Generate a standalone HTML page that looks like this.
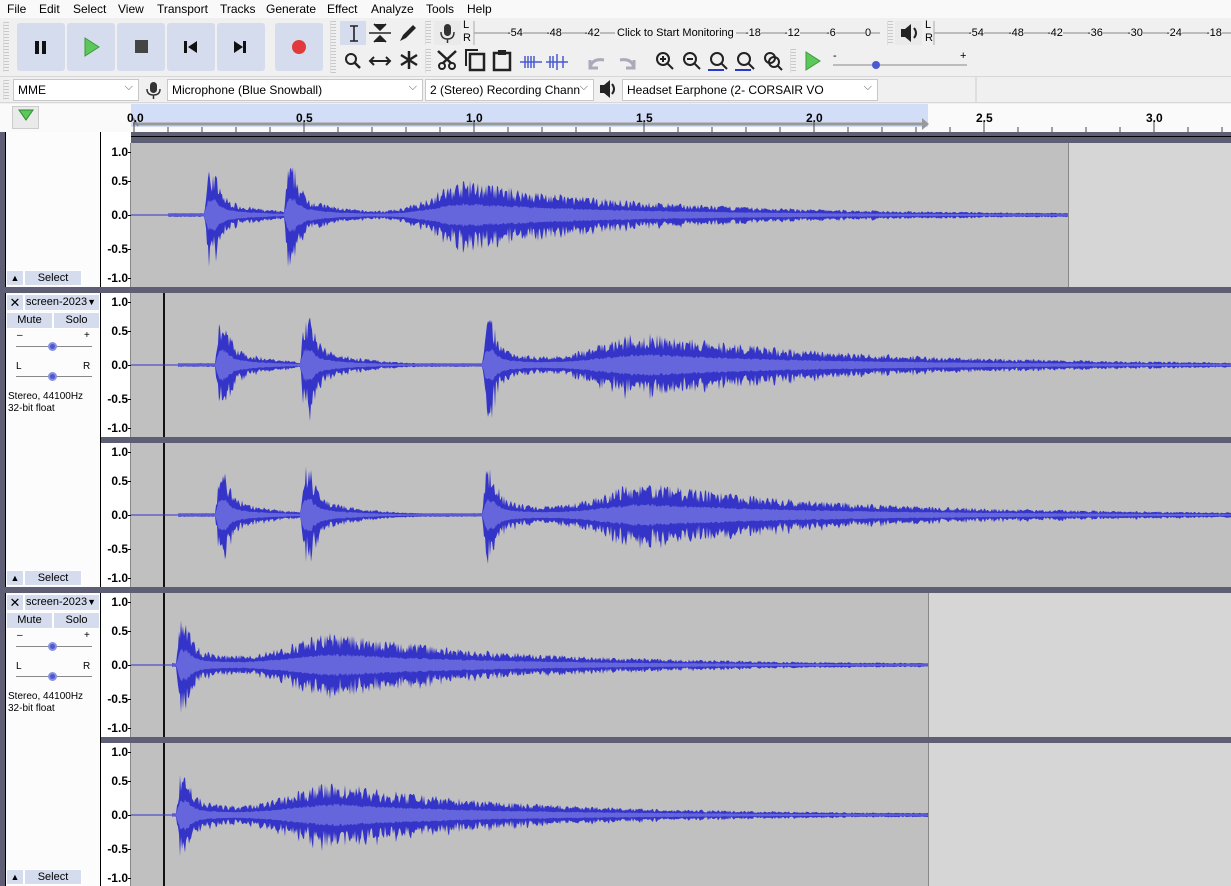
<!DOCTYPE html>
<html><head><meta charset="utf-8">
<style>
*{box-sizing:border-box;margin:0;padding:0}
body{width:1231px;height:886px;overflow:hidden;background:#f0f0f0;font-family:"Liberation Sans",Arial,sans-serif;font-size:12px;color:#000;position:relative}
.a{position:absolute}
.menu span{position:absolute;top:2px;font-size:12px}
.tb{background:#d5dcee;border-radius:3px}
.grip{position:absolute;width:6px;background:repeating-linear-gradient(#c8c8c8 0 1px,transparent 1px 3px);border-left:1px solid #ddd}
.sel{position:absolute;height:22px;background:#fff;border:1px solid #c8c8c8;font-size:12px;padding:3px 4px;white-space:nowrap;overflow:hidden}
.sel:after{content:"⌵";position:absolute;right:5px;top:1px;color:#555;font-size:11px}
.tl{position:absolute;font-weight:bold;font-size:12px}
.btn{position:absolute;background:#d5dcee;border:1px solid #fff;font-size:11px;text-align:center}
.vr{position:absolute;right:4px;font-weight:bold;font-size:12px}
</style></head><body>
<div class="a menu" style="left:0;top:0;width:1231px;height:18px;background:#f9f9f9">
<span style="left:7px">File</span><span style="left:39px">Edit</span><span style="left:73px">Select</span><span style="left:118px">View</span><span style="left:157px">Transport</span><span style="left:220px">Tracks</span><span style="left:266px">Generate</span><span style="left:327px">Effect</span><span style="left:371px">Analyze</span><span style="left:426px">Tools</span><span style="left:467px">Help</span>
</div>
<div class="a" style="left:0;top:18px;width:1231px;height:86px;background:#f0f0f0"></div>
<div class="grip" style="left:3px;top:22px;height:50px"></div>
<div class="a tb" style="left:17px;top:23px;width:48px;height:48px"></div>
<div class="a tb" style="left:67px;top:23px;width:48px;height:48px"></div>
<div class="a tb" style="left:117px;top:23px;width:48px;height:48px"></div>
<div class="a tb" style="left:167px;top:23px;width:48px;height:48px"></div>
<div class="a tb" style="left:217px;top:23px;width:48px;height:48px"></div>
<div class="a tb" style="left:275px;top:23px;width:48px;height:48px"></div>
<svg class="a" style="left:0;top:0" width="1231" height="104">
 <rect x="35" y="41" width="4" height="13" fill="#111"/><rect x="42" y="41" width="4" height="13" fill="#111"/>
 <path d="M85 38 L99 47 L85 56Z" fill="#5cc85c" stroke="#3a9a3a"/>
 <rect x="135" y="40" width="13" height="13" fill="#444"/>
 <rect x="184" y="41" width="3" height="12" fill="#111"/><path d="M197 41 L188 47 L197 53Z" fill="#111"/>
 <rect x="243" y="41" width="3" height="12" fill="#111"/><path d="M234 41 L243 47 L234 53Z" fill="#111"/>
 <circle cx="299" cy="47" r="7" fill="#e03a3a"/>
 <rect x="340" y="21" width="26" height="24" fill="#d5dcee"/>
 <path d="M350 26h8M354 26v15M350 41h8" stroke="#222" stroke-width="1.6" fill="none"/>
 <path d="M369 33h22M374 24l6 6 6-6M374 42l6-6 6 6" stroke="#222" stroke-width="1.6" fill="#222"/>
 <path d="M400 41l3-6 10-10 3 3-10 10z" fill="#222"/>
 <circle cx="351" cy="59" r="5" stroke="#222" stroke-width="2" fill="none"/><path d="M355 63l5 5" stroke="#222" stroke-width="2.5"/>
 <path d="M370 61h20M374 57l-4 4 4 4M386 57l4 4-4 4" stroke="#222" stroke-width="2" fill="none"/>
 <path d="M409 51v18M401 55l16 10M401 65l16-10" stroke="#222" stroke-width="2.5"/>
 <rect x="434" y="21" width="27" height="24" fill="#eaeaea"/>
 <rect x="444" y="24" width="7" height="12" rx="3.5" fill="#333"/><path d="M441 32q0 7 6.5 7q6.5 0 6.5-7M447.5 39v4" stroke="#333" stroke-width="1.5" fill="none"/>
 <path d="M474 33H880" stroke="#888"/>
 <path d="M474 21v24" stroke="#aaa"/>
 <circle cx="442" cy="66" r="3" stroke="#222" stroke-width="2" fill="none"/><circle cx="452" cy="66" r="3" stroke="#222" stroke-width="2" fill="none"/><path d="M443 63l13-12M451 63l-13-12" stroke="#222" stroke-width="2.5"/>
 <rect x="470" y="54" width="14" height="16" fill="none" stroke="#222" stroke-width="2.5"/><path d="M466 66V50h12" stroke="#222" stroke-width="2" fill="none"/>
 <rect x="494" y="53" width="16" height="17" fill="none" stroke="#222" stroke-width="2.5"/><rect x="498" y="50" width="8" height="5" fill="#222"/>
 <path d="M520 62h22M525 56v12M528 56v12M531 56v12M534 56v12" stroke="#4a5ad0" stroke-width="1.5"/>
 <path d="M546 62h22M550 56v12M553 56v12M557 54v16M563 56v12" stroke="#4a5ad0" stroke-width="1.5"/>
 <path d="M590 68q2-10 14-8M590 60v8h8" stroke="#aab" stroke-width="3" fill="none"/>
 <path d="M634 68q-2-10-14-8M634 60v8h-8" stroke="#aab" stroke-width="3" fill="none"/>
 <g stroke="#222" stroke-width="2" fill="none">
 <circle cx="663" cy="59" r="6"/><path d="M667 63l6 6M660 59h6M663 56v6"/>
 <circle cx="690" cy="59" r="6"/><path d="M694 63l6 6M687 59h6"/>
 <circle cx="717" cy="59" r="6"/><path d="M721 63l6 6"/>
 <circle cx="744" cy="59" r="6"/><path d="M748 63l6 6"/>
 <circle cx="770" cy="58" r="5"/><circle cx="774" cy="62" r="5"/><path d="M778 66l4 4"/>
 </g>
 <path d="M708 70h16M735 70h16" stroke="#2838c8" stroke-width="2"/>
 <path d="M806 52l14 9-14 9z" fill="#5cc85c" stroke="#3a9a3a"/>
 <path d="M833 65h134" stroke="#888"/><circle cx="876" cy="65" r="4" fill="#4a5ad0"/>
 <text x="833" y="59" font-size="11" font-family="Liberation Sans">-</text><text x="960" y="59" font-size="11" font-family="Liberation Sans">+</text>
 <rect x="895" y="21" width="27" height="24" fill="#eaeaea"/>
 <path d="M901 29h4l6-5v18l-6-5h-4z" fill="#222"/><path d="M914 28q4 5 0 10" stroke="#222" stroke-width="2" fill="none"/>
 <path d="M934 33H1231" stroke="#888"/><path d="M934 21v24" stroke="#aaa"/>
 <path d="M976 77v25" stroke="#ccc"/>
 <rect x="150" y="82" width="7" height="11" rx="3.5" fill="#333"/><path d="M147 89q0 6 6.5 6q6.5 0 6.5-6M153.5 95v4" stroke="#333" stroke-width="1.5" fill="none"/>
 <path d="M600 85h4l6-5v18l-6-5h-4z" fill="#222"/><path d="M612 84q4 5 0 10" stroke="#222" stroke-width="2" fill="none"/>
</svg>
<div class="grip" style="left:330px;top:21px;height:52px"></div>
<div class="grip" style="left:425px;top:21px;height:24px"></div>
<div class="grip" style="left:425px;top:49px;height:24px"></div>
<div class="grip" style="left:790px;top:49px;height:24px"></div>
<div class="grip" style="left:887px;top:21px;height:24px"></div>
<div class="a" style="left:463px;top:19px;font-size:11px;line-height:13px">L<br>R</div>
<div class="a" style="left:925px;top:19px;font-size:11px;line-height:13px">L<br>R</div>
<div class="a" style="left:475px;top:27px;width:405px;height:14px;font-size:11px">
<span class="a" style="left:32px;background:#f0f0f0">-54</span><span class="a" style="left:71px;background:#f0f0f0">-48</span><span class="a" style="left:109px;background:#f0f0f0">-42</span><span class="a" style="left:140px;background:#f0f0f0;padding:0 2px">Click to Start Monitoring</span><span class="a" style="left:270px;background:#f0f0f0">-18</span><span class="a" style="left:309px;background:#f0f0f0">-12</span><span class="a" style="left:351px;background:#f0f0f0">-6</span><span class="a" style="left:390px;background:#f0f0f0">0</span></div>
<div class="a" style="left:965px;top:27px;width:266px;font-size:11px">
<span class="a" style="left:3px;background:#f0f0f0">-54</span><span class="a" style="left:43px;background:#f0f0f0">-48</span><span class="a" style="left:82px;background:#f0f0f0">-42</span><span class="a" style="left:122px;background:#f0f0f0">-36</span><span class="a" style="left:162px;background:#f0f0f0">-30</span><span class="a" style="left:201px;background:#f0f0f0">-24</span><span class="a" style="left:241px;background:#f0f0f0">-18</span></div>
<div class="a" style="left:0;top:76px;width:1231px;height:1px;background:#d8d8d8"></div>
<div class="grip" style="left:3px;top:80px;height:20px"></div>
<div class="sel" style="left:13px;top:79px;width:126px">MME</div>
<div class="sel" style="left:167px;top:79px;width:256px">Microphone (Blue Snowball)</div>
<div class="sel" style="left:425px;top:79px;width:169px">2 (Stereo) Recording Chann</div>
<div class="sel" style="left:622px;top:79px;width:256px">Headset Earphone (2- CORSAIR VO</div>
<div class="a" style="left:0;top:102px;width:1231px;height:1px;background:#d8d8d8"></div>
<div class="a" style="left:0;top:104px;width:1231px;height:29px;background:#fafafa"></div>
<div class="a" style="left:131px;top:104px;width:797px;height:23px;background:#d2ddf7"></div>
<div class="a" style="left:12px;top:106px;width:27px;height:23px;background:#eaeaea;border:1px solid #ccc"></div>
<svg class="a" style="left:0;top:104px" width="1231" height="30">
 <path d="M19 6l7 10 7-10z" fill="#5cc85c" stroke="#2a8a2a"/>
 <path d="M133 20H925" stroke="#999" stroke-width="3"/><path d="M922 14l7 6-7 6z" fill="#999"/>
 <path d="M133 14l5 8" stroke="#888" stroke-width="2"/>
 <g id="ticks" stroke="#444"></g>
 <path d="M0 28.5H1231" stroke="#444"/>
</svg>
<div class="tl" style="left:127px;top:111px">0.0</div>
<div class="tl" style="left:296px;top:111px">0.5</div>
<div class="tl" style="left:466px;top:111px">1.0</div>
<div class="tl" style="left:636px;top:111px">1.5</div>
<div class="tl" style="left:806px;top:111px">2.0</div>
<div class="tl" style="left:976px;top:111px">2.5</div>
<div class="tl" style="left:1146px;top:111px">3.0</div>
<div class="a" style="left:0;top:132px;width:1231px;height:754px;background:#5e5e74"></div>
<div id="tracks"></div>
<svg id="wave" class="a" style="left:0;top:0" width="1231" height="886"></svg>
<script>
var T=document.getElementById('tracks');
function add(h){T.insertAdjacentHTML('beforeend',h)}
var tk='';for(var i=0;i<=33;i++){var x=134+34*i;tk+='<path d="M'+x+' '+(i%5==0?18:23)+'V28"/>';}
document.getElementById('ticks').innerHTML=tk;
function chan(top,bot,clipEnd,cursor){
 add('<div class="a" style="left:131px;top:'+top+'px;width:1100px;height:'+(bot-top)+'px;background:#d6d6d6"></div>');
 add('<div class="a" style="left:131px;top:'+top+'px;width:'+(clipEnd-131)+'px;height:'+(bot-top)+'px;background:#c0c0c0;'+(clipEnd<1231?'border-right:1px solid #888':'')+'"></div>');
 add('<div class="a" style="left:100px;top:'+top+'px;width:31px;height:'+(bot-top)+'px;background:#fff;border-left:1px solid #000;border-right:1px solid #888"></div>');
 var c=(top+bot)/2;
 [[1,c-63],[0.5,c-34],[0,c],[-0.5,c+34],[-1,c+63]].forEach(function(p){
  add('<div class="vr" style="left:100px;width:28px;text-align:right;top:'+(p[1]-7)+'px;font-size:12px;font-weight:bold">'+(p[0]==0?'0.0':p[0].toFixed(1))+'</div>');
  add('<div class="a" style="left:128px;top:'+p[1]+'px;width:3px;height:1px;background:#000"></div>');
 });
 if(cursor) add('<div class="a" style="left:163px;top:'+top+'px;width:2px;height:'+(bot-top)+'px;background:#111"></div>');
}
function panel(top,bot,hdr){
 add('<div class="a" style="left:5px;top:'+top+'px;width:96px;height:'+(bot-top)+'px;background:#fcfcfc;border-left:1px solid #000;border-right:1px solid #000"></div>');
 add('<div class="btn" style="left:6px;top:'+(bot-17)+'px;width:18px;height:16px;line-height:14px;font-size:9px">▲</div>');
 add('<div class="btn" style="left:24px;top:'+(bot-17)+'px;width:58px;height:16px;line-height:14px">Select</div>');
 if(hdr){var t=top;
  add('<div class="btn" style="left:6px;top:'+(t+1)+'px;width:18px;height:17px;line-height:15px;font-size:13px">✕</div>');
  add('<div class="btn" style="left:24px;top:'+(t+1)+'px;width:76px;height:17px;line-height:15px;text-align:left;padding-left:1px">screen-2023<span style="font-size:9px">▼</span></div>');
  add('<div class="btn" style="left:6px;top:'+(t+19)+'px;width:47px;height:17px;line-height:15px">Mute</div>');
  add('<div class="btn" style="left:53px;top:'+(t+19)+'px;width:47px;height:17px;line-height:15px">Solo</div>');
  add('<div class="a" style="left:17px;top:'+(t+37)+'px;font-size:10px">–</div><div class="a" style="left:84px;top:'+(t+37)+'px;font-size:10px">+</div>');
  add('<div class="a" style="left:16px;top:'+(t+53)+'px;width:76px;height:1px;background:#888"></div><div class="a" style="left:48px;top:'+(t+49)+'px;width:9px;height:9px;border-radius:50%;background:#4a5ad0;border:2px solid #8890e0"></div>');
  add('<div class="a" style="left:16px;top:'+(t+68)+'px;font-size:10px">L</div><div class="a" style="left:83px;top:'+(t+68)+'px;font-size:10px">R</div>');
  add('<div class="a" style="left:16px;top:'+(t+83)+'px;width:76px;height:1px;background:#888"></div><div class="a" style="left:48px;top:'+(t+79)+'px;width:9px;height:9px;border-radius:50%;background:#4a5ad0;border:2px solid #8890e0"></div>');
  add('<div class="a" style="left:8px;top:'+(t+98)+'px;font-size:10px;line-height:12px">Stereo, 44100Hz<br>32-bit float</div>');
 }
}
add('<div class="a" style="left:131px;top:136px;width:1100px;height:1px;background:#000"></div>');
chan(143,287,1069,false);
add('<div class="a" style="left:100px;top:132px;width:31px;height:11px;background:#fff;border-left:1px solid #000"></div>');
panel(132,287,false);
chan(293,437,1231,true);chan(443,587,1231,true);panel(293,587,true);
chan(593,737,929,true);chan(743,886,929,true);panel(593,886,true);
add('<div class="a" style="left:5px;top:437px;width:96px;height:6px;background:#fcfcfc;border-left:1px solid #000;border-right:1px solid #000"></div>');
add('<div class="a" style="left:5px;top:737px;width:96px;height:6px;background:#fcfcfc;border-left:1px solid #000;border-right:1px solid #000"></div>');
var seed=7;function rnd(){seed=(seed*16807)%2147483647;return seed/2147483647}
function env(x,sp,sw){var v=0;
 sp.forEach(function(s){var d=x-s;if(d<-4)return;if(d<0)v+=40*(1+d/4);else v+=(d<7?40:40*(0.6*Math.exp(-(d-7)/6)+0.4*Math.exp(-(d-7)/45)));});
 if(sw){var d=x-sw[0];v+= d<0? sw[1]*Math.exp(-Math.pow(d/sw[2],2)) : sw[1]*(0.7*Math.exp(-d/sw[3])+0.3*Math.exp(-d/(sw[3]*2.2)));}
 return Math.max(v,1.5);}
var W=document.getElementById('wave'),out='';
function wave(c,start,end,sp,sw){
 var up='',dn='',iu='',id='';
 for(var x=start;x<=end;x++){var e=env(x,sp,sw);var r=0.55+0.6*rnd();var o=Math.max(1.5,e*r);var i=Math.max(0.8,e*(0.3+0.1*rnd()));
  up+=x+','+(c-o).toFixed(1)+' ';dn=x+','+(c+o*(0.8+0.4*rnd())).toFixed(1)+' '+dn;
  iu+=x+','+(c-i).toFixed(1)+' ';id=x+','+(c+i).toFixed(1)+' '+id;}
 out+='<path d="M131 '+c+'H'+end+'" stroke="#3434c8" stroke-width="1"/>';
 out+='<polygon points="'+up+dn+'" fill="#3434c8"/>';
 out+='<polygon points="'+iu+id+'" fill="#6666dc"/>';
}
wave(215,168,1068,[208,288],[470,30,50,150]);
wave(365,178,1231,[219,304,486],[650,28,70,170]);
wave(515,178,1231,[219,304,486],[650,28,70,170]);
wave(665,172,928,[180],[340,28,70,150]);
wave(815,172,928,[180],[340,28,70,150]);
W.innerHTML=out;
</script>
</body></html>
